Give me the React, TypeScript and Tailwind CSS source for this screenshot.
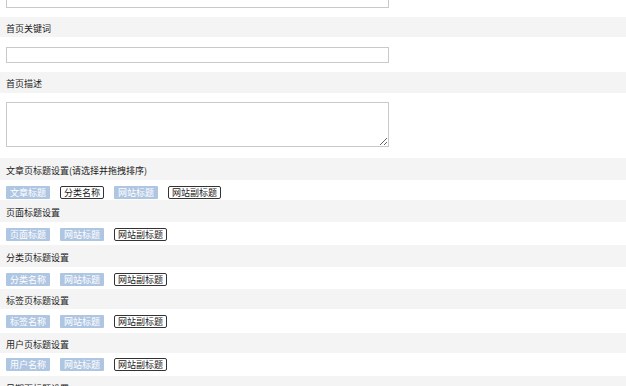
import React from "react";

const Band = ({ text, h }: { text: string; h: string }) => (
  <div className={`${h} shrink-0 bg-[#f4f4f4] px-[6px] flex items-center text-[9px] leading-[11px] text-[#1a1a1a]`}>
    <span className="pt-[2px]">{text}</span>
  </div>
);

const Blue = ({ t }: { t: string }) => (
  <span className="h-[13px] px-[4px] bg-[#afc6e3] text-white text-[9px] leading-[13px] rounded-[1px] flex items-center">
    {t}
  </span>
);

const Out = ({ t }: { t: string }) => (
  <span className="h-[13px] px-[3px] border border-[#333] bg-white text-[#1a1a1a] text-[9px] leading-[11px] rounded-[2px] flex items-center">
    {t}
  </span>
);

export default function App() {
  return (
    <div className="w-[626px] h-[386px] overflow-hidden bg-white flex flex-col font-['Noto_Sans_CJK_SC','Noto_Sans',sans-serif]">
      <div className="shrink-0 px-[6px] pb-[9px] flex flex-col">
        <input className="-mt-[8px] h-[16px] w-[383px] border border-[#c9c9c9] bg-white" />
      </div>
      <Band text="首页关键词" h="h-[20px]" />
      <div className="shrink-0 px-[6px] pt-[10px] pb-[9px] flex flex-col">
        <input className="h-[16px] w-[383px] border border-[#c9c9c9] bg-white" />
      </div>
      <Band text="首页描述" h="h-[21px]" />
      <div className="shrink-0 px-[6px] pt-[9px] pb-[11px] flex flex-col">
        <textarea className="h-[45px] w-[383px] border border-[#c9c9c9] bg-white block" />
      </div>
      <Band text="文章页标题设置(请选择并拖拽排序)" h="h-[22px]" />
      <div className="shrink-0 px-[6px] pt-[6px] pb-[1px] flex gap-[10px]">
        <Blue t="文章标题" />
        <Out t="分类名称" />
        <Blue t="网站标题" />
        <Out t="网站副标题" />
      </div>
      <Band text="页面标题设置" h="h-[22px]" />
      <div className="shrink-0 px-[6px] pt-[6px] pb-[4px] flex gap-[10px]">
        <Blue t="页面标题" />
        <Blue t="网站标题" />
        <Out t="网站副标题" />
      </div>
      <Band text="分类页标题设置" h="h-[22px]" />
      <div className="shrink-0 px-[6px] pt-[6px] pb-[3px] flex gap-[10px]">
        <Blue t="分类名称" />
        <Blue t="网站标题" />
        <Out t="网站副标题" />
      </div>
      <Band text="标签页标题设置" h="h-[20px]" />
      <div className="shrink-0 px-[6px] pt-[6px] pb-[5px] flex gap-[10px]">
        <Blue t="标签名称" />
        <Blue t="网站标题" />
        <Out t="网站副标题" />
      </div>
      <Band text="用户页标题设置" h="h-[20px]" />
      <div className="shrink-0 px-[6px] pt-[5px] pb-[5px] flex gap-[10px]">
        <Blue t="用户名称" />
        <Blue t="网站标题" />
        <Out t="网站副标题" />
      </div>
      <Band text="日期页标题设置" h="h-[22px]" />
    </div>
  );
}
